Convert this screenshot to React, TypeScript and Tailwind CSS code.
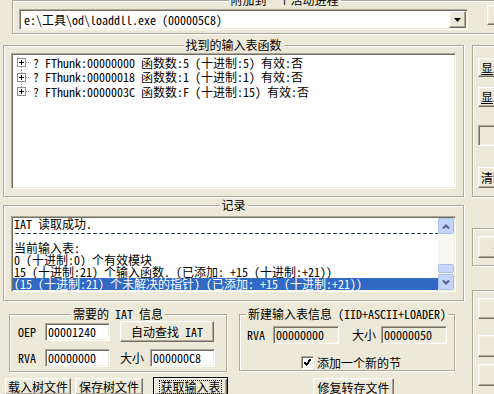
import type { ReactNode } from "react";

const raised =
  "border border-t-white border-l-white border-r-[#716F64] border-b-[#716F64] shadow-[inset_-1px_-1px_0_#ACA899,inset_1px_1px_0_#F1EFE2]";
const sunken =
  "border border-t-[#ACA899] border-l-[#ACA899] border-r-white border-b-white shadow-[inset_1px_1px_0_#716F64,inset_-1px_-1px_0_#F1EFE2]";

const treeRows = [
  "? FThunk:00000000 函数数:5 (十进制:5) 有效:否",
  "? FThunk:00000018 函数数:1 (十进制:1) 有效:否",
  "? FThunk:0000003C 函数数:F (十进制:15) 有效:否",
];

const logRows = [
  "IAT 读取成功.",
  "-".repeat(72),
  "当前输入表:",
  "0 (十进制:0) 个有效模块",
  "15 (十进制:21) 个输入函数. (已添加: +15 (十进制:+21))",
];

function Group({
  title,
  className = "",
  children,
}: {
  title?: string;
  className?: string;
  children?: ReactNode;
}) {
  return (
    <div
      className={`relative shrink-0 border border-[#ACA899] shadow-[inset_1px_1px_0_#fff,1px_1px_0_#fff] ${className}`}
    >
      {title && (
        <span className="absolute left-1/2 top-[-7px] -translate-x-1/2 whitespace-pre bg-[#ECE9D8] px-[2px]">
          {title}
        </span>
      )}
      {children}
    </div>
  );
}

function Button({ className = "", children }: { className?: string; children?: ReactNode }) {
  return (
    <div className={`${raised} flex shrink-0 items-center justify-center whitespace-pre bg-[#ECE9D8] ${className}`}>
      {children}
    </div>
  );
}

function Edit({ value, className = "" }: { value: string; className?: string }) {
  return (
    <div className={`${sunken} flex h-[18px] shrink-0 items-center pl-[2px] ${className}`}>{value}</div>
  );
}

function TreeGutter({ h, first, last }: { h: number; first: boolean; last: boolean }) {
  return (
    <svg width="20" height={h} className="shrink-0" shapeRendering="crispEdges">
      {!first && <line x1="8.5" y1="0" x2="8.5" y2="3" stroke="#A0A0A0" strokeDasharray="1 1" />}
      {!last && <line x1="8.5" y1="12" x2="8.5" y2={h} stroke="#A0A0A0" strokeDasharray="1 1" />}
      <line x1="13" y1="7.5" x2="19" y2="7.5" stroke="#A0A0A0" strokeDasharray="1 1" />
      <rect x="4.5" y="3.5" width="8" height="8" fill="#fff" stroke="#8E8F8F" />
      <line x1="6" y1="7.5" x2="11" y2="7.5" stroke="#000" />
      <line x1="8.5" y1="5" x2="8.5" y2="10" stroke="#000" />
    </svg>
  );
}

function ScrollArrow({ up }: { up: boolean }) {
  return (
    <div className="flex h-[16px] items-center justify-center rounded-[2px] border border-[#A9BFEF] bg-[#C4D5FC]">
      <svg width="8" height="5">
        <path d={up ? "M1 4.5L4 1.5L7 4.5" : "M1 0.5L4 3.5L7 0.5"} fill="none" stroke="#4D6185" strokeWidth="2" />
      </svg>
    </div>
  );
}

export default function App() {
  return (
    <div className="relative h-[394px] w-[494px] overflow-hidden bg-[#ECE9D8] font-['Noto_Sans_Mono_CJK_SC','Noto_Sans_CJK_SC',monospace] text-[12px] leading-[12px] text-black">
      <Group title="附加到一个活动进程" className="ml-[12px] flex h-[34px] w-[545px] items-start">
        <div className={`${sunken} ml-[6px] mt-[8px] flex h-[21px] w-[449px] shrink-0 bg-white p-[1px]`}>
          <span className="flex-1 self-center whitespace-pre pl-[3px]">e:\工具\od\loaddll.exe (000005C8)</span>
          <Button className="h-[17px] w-[17px]">
            <svg width="7" height="4">
              <path d="M0 0H7L3.5 4Z" fill="#000" />
            </svg>
          </Button>
        </div>
        <Button className="ml-[19px] mt-[4px] h-[20px] w-[60px]" />
      </Group>

      <div className="mt-[11px] flex">
        <div className="flex w-[466px] shrink-0 flex-col">
          <Group title="找到的输入表函数" className="ml-[3px] h-[152px] w-[461px]">
            <div className={`${sunken} ml-[7px] mt-[7px] h-[136px] w-[445px] bg-white p-[1px]`}>
              {treeRows.map((row, i) => {
                const h = i === 1 ? 14 : 15;
                return (
                  <div key={i} className="flex items-center whitespace-pre" style={{ height: h }}>
                    <TreeGutter h={h} first={i === 0} last={i === treeRows.length - 1} />
                    {row}
                  </div>
                );
              })}
            </div>
          </Group>

          <Group title="记录" className="ml-[3px] mt-[8px] h-[96px] w-[461px]">
            <div className={`${sunken} ml-[7px] mt-[10px] flex h-[76px] w-[445px] bg-white p-[1px]`}>
              <div className="flex flex-1 flex-col justify-end overflow-hidden">
                {logRows.map((row, i) => (
                  <div key={i} className="h-[12px] shrink-0 overflow-hidden whitespace-pre pl-[1px]">
                    <span className={i === 1 ? "relative top-[-4px]" : ""}>{row}</span>
                  </div>
                ))}
                <div className="h-[12px] shrink-0 whitespace-pre bg-[#316AC5] pl-[1px] text-white">
                  (15 (十进制:21) 个未解决的指针) (已添加: +15 (十进制:+21))
                </div>
              </div>
              <div className="flex w-[16px] shrink-0 flex-col bg-[#F7F6F1]">
                <ScrollArrow up />
                <div className="flex flex-1 flex-col justify-end pb-[1px]">
                  <div className="h-[9px] rounded-[2px] border border-[#A9BFEF] bg-[#C8D8FC]" />
                </div>
                <ScrollArrow up={false} />
              </div>
            </div>
          </Group>

          <div className="mt-[13px] flex items-start">
            <Group title="需要的 IAT 信息" className="ml-[9px] h-[58px] w-[218px]">
              <div className="mt-[6px] flex h-[21px] items-center">
                <span className="ml-[8px] w-[27px]">OEP</span>
                <Edit value="00001240" className="w-[65px] bg-white" />
                <Button className="ml-[10px] h-[21px] w-[94px]">自动查找 IAT</Button>
              </div>
              <div className="mt-[7px] flex h-[18px] items-center">
                <span className="ml-[8px] w-[27px]">RVA</span>
                <Edit value="00000000" className="w-[65px] bg-white" />
                <span className="ml-[10px] w-[24px]">大小</span>
                <Edit value="000000C8" className="ml-[6px] w-[65px] bg-white" />
              </div>
            </Group>
            <Group title="新建输入表信息 (IID+ASCII+LOADER)" className="ml-[12px] h-[57px] w-[216px]">
              <div className="mt-[11px] flex h-[18px] items-center">
                <span className="ml-[7px] w-[26px]">RVA</span>
                <Edit value="00000000" className="w-[66px] bg-[#ECE9D8]" />
                <span className="ml-[13px] w-[24px]">大小</span>
                <Edit value="00000050" className="ml-[5px] w-[66px] bg-[#ECE9D8]" />
              </div>
              <div className="mt-[12px] flex items-center">
                <div className={`${sunken} ml-[61px] flex h-[13px] w-[13px] items-center justify-center bg-white`}>
                  <svg width="9" height="9" shapeRendering="crispEdges">
                    <path d="M1.5 4L3.5 6.5L7.5 1.5" fill="none" stroke="#000" strokeWidth="2" />
                  </svg>
                </div>
                <span className="ml-[3px]">添加一个新的节</span>
              </div>
            </Group>
          </div>

          <div className="mt-[5px] flex items-start">
            <Button className="ml-[5px] mt-[1px] h-[17px] w-[66px]">载入树文件</Button>
            <Button className="ml-[4px] mt-[1px] h-[17px] w-[68px]">保存树文件</Button>
            <div className="ml-[10px] flex h-[19px] w-[75px] shrink-0 items-center justify-center border border-black bg-[#ECE9D8] shadow-[inset_1px_1px_0_#fff,inset_-1px_-1px_0_#716F64,inset_-2px_-2px_0_#ACA899]">
              <span className="outline outline-1 outline-dotted outline-black">获取输入表</span>
            </div>
            <Button className="ml-[85px] mt-[1px] h-[19px] w-[81px]">修复转存文件</Button>
          </div>
        </div>

        <div className="ml-[6px] flex w-[80px] shrink-0 flex-col">
          <Group className="h-[152px] w-[80px]">
            <Button className="ml-[5px] mt-[12px] h-[19px] w-[70px] !justify-start pl-[2px]">
              <span className="underline underline-offset-[1px]">显</span>示函数
            </Button>
            <Button className="ml-[5px] mt-[10px] h-[20px] w-[70px] !justify-start pl-[2px]">
              <span className="underline underline-offset-[1px]">显</span>示无效
            </Button>
            <div className={`${sunken} ml-[5px] mt-[18px] h-[21px] w-[70px]`} />
            <Button className="ml-[5px] mt-[21px] h-[21px] w-[70px] !justify-start pl-[2px]">清除</Button>
          </Group>
          <Group className="mt-[31px] h-[38px] w-[80px]">
            <Button className="ml-[5px] mt-[7px] h-[22px] w-[70px] !justify-start pl-[14px]">导入</Button>
          </Group>
          <Group className="mt-[24px] h-[120px] w-[80px]">
            <Button className="ml-[5px] mt-[7px] h-[21px] w-[70px]" />
            <Button className="ml-[5px] mt-[16px] h-[22px] w-[70px]" />
            <Button className="ml-[5px] mt-[7px] h-[22px] w-[70px]" />
          </Group>
        </div>
      </div>
    </div>
  );
}
